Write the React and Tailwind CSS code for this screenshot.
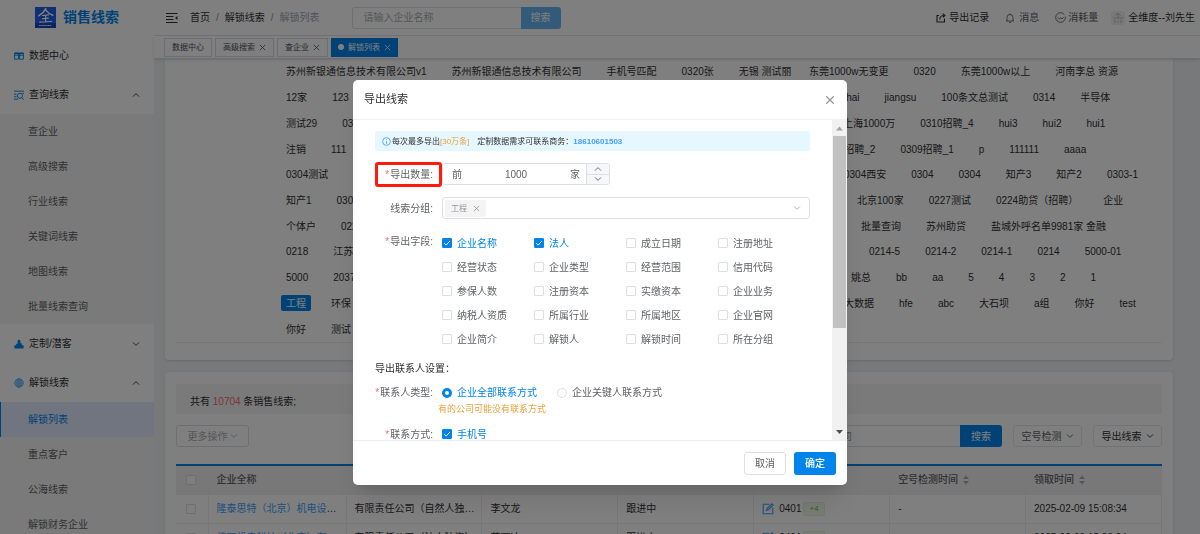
import React from "react";

const EXPORT_FIELDS = [
  "企业名称", "法人", "成立日期", "注册地址",
  "经营状态", "企业类型", "经营范围", "信用代码",
  "参保人数", "注册资本", "实缴资本", "企业业务",
  "纳税人资质", "所属行业", "所属地区", "企业官网",
  "企业简介", "解锁人", "解锁时间", "所在分组",
];

// `lead` is the width taken by the first tags of a row, before `rest` starts
const TAG_ROWS = [
  {
    lead: 523,
    first: ["苏州新银通信息技术有限公司v1", "苏州新银通信息技术有限公司", "手机号匹配", "0320张", "无锡 测试丽"],
    rest: ["东莞1000w无变更", "0320", "东莞1000w以上", "河南李总 资源"],
  },
  { lead: 533, first: ["12家", "123"], rest: ["shanghai", "jiangsu", "100条文总测试", "0314", "半导体"] },
  { lead: 557, first: ["测试29", "0311"], rest: ["上海1000万", "0310招聘_4", "hui3", "hui2", "hui1"] },
  { lead: 536, first: ["注销", "111"], rest: ["0309招聘_2", "0309招聘_1", "p", "111111", "aaaa"] },
  { lead: 558, first: ["0304测试"], rest: ["0304西安", "0304", "0304", "知产3", "知产2", "0303-1"] },
  { lead: 571, first: ["知产1", "0303"], rest: ["北京100家", "0227测试", "0224助贷（招聘）", "企业"] },
  { lead: 575, first: ["个体户", "0224"], rest: ["批量查询", "苏州助贷", "盐城外呼名单9981家 金融"] },
  { lead: 583, first: ["0218", "江苏"], rest: ["0214-5", "0214-2", "0214-1", "0214", "5000-01"] },
  { lead: 565, first: ["5000", "2037"], rest: ["姚总", "bb", "aa", "5", "4", "3", "2", "1"] },
  { lead: 558, first: ["工程", "环保"], rest: ["大数据", "hfe", "abc", "大石坝", "a组", "你好", "test"] },
  { lead: 558, first: ["你好", "测试"], rest: [] },
];

const TABLE_ROWS = [
  { name: "隆泰思特（北京）机电设备有限公司", type: "有限责任公司（自然人独资）", person: "李文龙" },
  { name: "佳丽机电科技（北京）有限公司", type: "有限责任公司（法人独资）", person: "蒋丽冰" },
];

const Chevron = ({ up, className = "" }) => (
  <svg viewBox="0 0 8 8" className={`h-2 w-2 ${className}`} fill="none" stroke="currentColor" strokeWidth="0.9">
    <path d={up ? "M1 5.6 4 2.6l3 3" : "M1 2.4l3 3 3-3"} />
  </svg>
);

const Close = ({ className = "" }) => (
  <svg viewBox="0 0 8 8" className={className} fill="none" stroke="currentColor" strokeWidth="0.9">
    <path d="M1 1l6 6M7 1L1 7" />
  </svg>
);

const Logo = () => (
  <svg viewBox="0 0 21 21" className="h-[21px] w-[21px]">
    <rect width="21" height="21" fill="#2361e6" />
    <rect y="16" width="21" height="5" fill="#1a49c4" />
    <g fill="none" stroke="#fff" strokeLinecap="round">
      <path strokeWidth="1.5" d="M10.8 1.6C9.3 4.6 7 7 3.6 8.8M10.4 2.6c2 2.6 4 4.4 7.4 5.6" />
      <path strokeWidth="1.2" d="M7.5 8.5l6-.6M7.7 11.6l5.6-.5M10.6 8.4v6.4M4.8 15.2l11.8-.7" />
      <path strokeWidth="0.9" strokeDasharray="0.8 1.3" d="M4.5 18.5h12" />
    </g>
  </svg>
);

const icons = {
  book: (
    <g fill="none" stroke="#0084ea" strokeWidth="0.9">
      <path d="M.6 2h3.8v6.2H.6zM5.6 2h3.8v6.2H5.6zM.6 4.2h8.8" />
      <path d="M.6 2.4h8.8" strokeWidth="1.4" />
    </g>
  ),
  query: (
    <g fill="none" stroke="#0084ea" strokeWidth="0.9">
      <path d="M0 1.2h10M0 4.2h2.6M0 6.8h2.6M0 9.2h4M8 8l1.8 1.6M8.4 3.4H10" />
      <circle cx="6" cy="5.8" r="2.5" />
    </g>
  ),
  custom: (
    <g fill="#0084ea">
      <path d="M5 .4l1.4 1.4v2.4h1.4v2h1.8v3.2H.4V6.200h1.800V4.800h1.400v-3z" />
    </g>
  ),
  globe: (
    <g fill="none" stroke="#409eff" strokeWidth="0.8">
      <circle cx="5" cy="5" r="4.3" />
      <ellipse cx="5" cy="5" rx="2" ry="4.3" />
      <path d="M.7 5h8.6M5 .7v8.6M1.4 2.9h7.2M1.4 7.1h7.2" />
    </g>
  ),
};

const MenuItem = ({ icon, label, arrow }) => (
  <button type="button" className="flex h-[39px] w-full items-center px-[14px] text-[#303133]">
    <svg viewBox="0 0 10 10" className="mr-[5px] h-[10px] w-[10px]">{icons[icon]}</svg>
    <span className="flex-1 text-left">{label}</span>
    {arrow ? <Chevron up={arrow === "up"} /> : null}
  </button>
);

const SubMenu = ({ items, active }) => (
  <ul className="bg-[#f5f5f5]">
    {items.map((item) => (
      <li key={item}>
        <a
          href="#"
          className={
            item === active
              ? "flex h-[35px] items-center border-l border-[#0084ea] bg-[#e0eaff] pl-[27px] text-[#0084ea]"
              : "flex h-[35px] items-center pl-7 text-[#606266]"
          }
        >
          {item}
        </a>
      </li>
    ))}
  </ul>
);

const Sidebar = () => (
  <aside className="w-[154px] shrink-0 bg-white">
    <div className="flex h-[35px] items-center gap-[7px] pl-[35px]">
      <Logo />
      <span className="text-[14px] font-bold text-[#0084ea]">销售线索</span>
    </div>
    <nav className="pt-px">
      <MenuItem icon="book" label="数据中心" />
      <MenuItem icon="query" label="查询线索" arrow="up" />
      <SubMenu items={["查企业", "高级搜索", "行业线索", "关键词线索", "地图线索", "批量线索查询"]} />
      <MenuItem icon="custom" label="定制/潜客" arrow="down" />
      <MenuItem icon="globe" label="解锁线索" arrow="up" />
      <SubMenu items={["解锁列表", "重点客户", "公海线索", "解锁财务企业"]} active="解锁列表" />
    </nav>
  </aside>
);

const Header = () => (
  <header className="flex h-9 items-center border-b border-[#e4e7ed] bg-white pr-[5px] pl-3 text-[#303133]">
    <svg viewBox="0 0 12 12" className="h-3 w-3" fill="none" stroke="currentColor" strokeWidth="1.1">
      <path d="M0 1.5h11.5M0 4.500h7.500M0 7.500h7.500M0 10.500h11.500" />
      <path d="M11.500 4v4L9 6z" fill="currentColor" stroke="none" />
    </svg>
    <nav className="ml-3 flex gap-[6px]">
      <a href="#">首页</a>
      <span className="text-[#909399]">/</span>
      <a href="#">解锁线索</a>
      <span className="text-[#909399]">/</span>
      <span className="text-[#a0a8b4]">解锁列表</span>
    </nav>
    <form className="ml-8 flex h-[22px]">
      <input
        type="text"
        aria-label="企业名称"
        placeholder="请输入企业名称"
        className="w-[169px] rounded-l-[3px] border border-r-0 border-[#dcdfe6] px-[11px] placeholder:text-[#a8abb2]"
      />
      <button type="button" className="w-10 rounded-r-[3px] bg-[#66b5f2] text-white">搜索</button>
    </form>
    <div className="ml-auto flex items-center">
      <a href="#" className="flex items-center gap-[3px]">
        <svg viewBox="0 0 10 10" className="h-[10px] w-[10px]" fill="none" stroke="currentColor" strokeWidth="1.1">
          <path d="M3 2.500H1v6.500h7.500V5.500M3.800 6.500c0-2.500 1.500-4 4.200-4M6.800.6 9 2.500 6.800 4.400" />
        </svg>
        导出记录
      </a>
      <a href="#" className="ml-4 flex items-center gap-1 text-[#606266]">
        <svg viewBox="0 0 10 10" className="h-[10px] w-[10px]" fill="none" stroke="currentColor" strokeWidth="0.9">
          <path d="M1 8h8M2 8V4.500a3 3 0 0 1 6 0V8M4 9.400h2M5 .4v1" />
        </svg>
        消息
      </a>
      <a href="#" className="ml-4 flex items-center gap-[2px] text-[#606266]">
        <svg viewBox="0 0 10 10" className="h-[11px] w-[11px]" fill="none" stroke="currentColor" strokeWidth="0.8">
          <circle cx="5" cy="5" r="4.4" strokeDasharray="24 2" />
          <path d="M2.400 4.800 4 6.400l1.300-1.200L6.300 6.400 7.800 4.800" />
        </svg>
        消耗量
      </a>
      <a href="#" className="ml-[13px] flex items-center gap-[3px]">
        <svg viewBox="0 0 14 14" className="h-[14px] w-[14px]">
          <rect width="14" height="14" rx="3" fill="#f0f0f0" />
          <path d="M7 2v5M4.500 4.500 7 2l2.500 2.500M2 7h10M4 9v3M7 10v2M10 9v3" fill="none" stroke="#bdbdbd" strokeWidth="1" />
        </svg>
        全维度--刘先生
      </a>
    </div>
  </header>
);

const pageTabs = [
  { label: "数据中心" },
  { label: "高级搜索", closable: true },
  { label: "查企业", closable: true },
  { label: "解锁列表", closable: true, active: true },
];

const PageTabs = () => (
  <div className="relative z-10 flex h-[23px] items-center gap-[3px] border-b border-[#d8dce5] bg-white pl-[10px] text-[8px] shadow-sm">
    {pageTabs.map((tab) => (
      <button
        key={tab.label}
        type="button"
        className={
          tab.active
            ? "flex h-[19px] items-center gap-1 border border-[#0084ea] bg-[#0084ea] px-[6px] text-white"
            : "flex h-[19px] items-center gap-1 border border-[#d8dce5] px-[7px] text-[#495060]"
        }
      >
        {tab.active ? <span className="h-[6px] w-[6px] rounded-full bg-white" /> : null}
        {tab.label}
        {tab.closable ? <Close className="h-[7px] w-[7px]" /> : null}
      </button>
    ))}
  </div>
);

const Tag = ({ label, active }) => (
  <button
    type="button"
    className={
      active
        ? "h-4 rounded-[2px] bg-[#0084ea] px-[5px] whitespace-nowrap text-white"
        : "h-4 px-[5px] whitespace-nowrap text-[#303133]"
    }
  >
    {label}
  </button>
);

const GroupCard = () => (
  <section className="rounded-b bg-white px-[11px] pb-[17px] shadow">
    <div className="grid h-[284px] border-b border-[#ebeef5] pl-[105px]">
      {TAG_ROWS.map((row, i) => (
        <div key={i} className="flex items-center">
          <div className="flex shrink-0 gap-[15px]" style={{ width: row.lead }}>
            {row.first.map((label) => (
              <Tag key={label} label={label} active={label === "工程"} />
            ))}
          </div>
          <div className="flex gap-[15px]">
            {row.rest.map((label, j) => (
              <Tag key={j} label={label} />
            ))}
          </div>
        </div>
      ))}
    </div>
  </section>
);

const SortIcon = () => (
  <svg viewBox="0 0 6 10" className="h-[10px] w-[6px]" fill="#a8abb2">
    <path d="M0 4l3-3.400L6 4zM0 6l3 3.400L6 6z" />
  </svg>
);

const cell = "truncate border-r border-b border-[#ebeef5] pr-[6px] pl-2";

const ListCard = () => (
  <section className="rounded bg-white px-[11px] pt-3 shadow">
    <p className="flex h-[30px] items-center bg-[#f5f5f5] px-[14px] pt-1 text-[#303133]">
      共有&nbsp;<span className="text-[#f56c6c]">10704</span>&nbsp;条销售线索;
    </p>
    <div className="mt-[11px] flex h-[22px] items-stretch">
      <button type="button" className="flex w-[73px] items-center justify-center gap-[2px] rounded-[3px] border border-[#dcdfe6] text-[#a8abb2]">
        更多操作
        <Chevron />
      </button>
      <input
        type="text"
        aria-label="搜索公司"
        placeholder="请输入公司"
        className="ml-auto w-[171px] rounded-l-[3px] border border-r-0 border-[#dcdfe6] px-3 placeholder:text-[#909399]"
      />
      <button type="button" className="w-[42px] rounded-r-[3px] bg-[#0084ea] text-white">搜索</button>
      <button type="button" className="ml-[11px] flex w-[69px] items-center justify-center gap-1 rounded-[3px] border border-[#e4e7ed] text-[#606266]">
        空号检测
        <Chevron />
      </button>
      <button type="button" className="ml-[11px] flex w-[69px] items-center justify-center gap-1 rounded-[3px] border border-[#e4e7ed] text-[#303133]">
        导出线索
        <Chevron />
      </button>
    </div>
    <table className="mt-[17px] w-full table-fixed border-t-2 border-[#0084ea] text-left">
      <thead>
        <tr className="h-[29px] bg-[#f0f0f0] text-[#606266]">
          <th className={`${cell} w-8`}>
            <input type="checkbox" aria-label="全选" className="ml-[2px] block h-[10px] w-[10px] appearance-none rounded-[1px] border border-[#dcdfe6] bg-white" />
          </th>
          <th className={`${cell} w-[138px] font-medium`}>企业全称</th>
          <th className={`${cell} font-medium`}>企业类型</th>
          <th className={`${cell} font-medium`}>法人</th>
          <th className={`${cell} font-medium`}>跟进状态</th>
          <th className={`${cell} font-medium`}>分组</th>
          <th className={`${cell} font-medium`}>
            <span className="flex items-center gap-[5px]">空号检测时间 <SortIcon /></span>
          </th>
          <th className={`${cell} font-medium`}>
            <span className="flex items-center gap-[5px]">领取时间 <SortIcon /></span>
          </th>
        </tr>
      </thead>
      <tbody className="text-[#303133]">
        {TABLE_ROWS.map((row) => (
          <tr key={row.name} className="h-[29px]">
            <td className={cell}>
              <input type="checkbox" aria-label={row.name} className="ml-[2px] block h-[10px] w-[10px] appearance-none rounded-[1px] border border-[#dcdfe6] bg-white" />
            </td>
            <td className={cell}><a href="#" className="text-[#409eff]">{row.name}</a></td>
            <td className={cell}>{row.type}</td>
            <td className={cell}>{row.person}</td>
            <td className={cell}>跟进中</td>
            <td className={cell}>
              <span className="flex items-center">
                <svg viewBox="0 0 12 12" className="mr-[5px] h-3 w-3" fill="none" stroke="#409eff" strokeWidth="1.1">
                  <path d="M7.500 1.200H1.200v9.600h9.600V4.800M4.500 7.500l.4-1.600L10 .8l1.200 1.200-5.100 5.100z" />
                </svg>
                0401
                <span className="ml-[2px] rounded-[2px] border border-[#e1f3d8] bg-[#f0f9eb] px-[5px] text-[8px] leading-3 text-[#67c23a]">+4</span>
              </span>
            </td>
            <td className={cell}>-</td>
            <td className={cell}>2025-02-09 15:08:34</td>
          </tr>
        ))}
      </tbody>
    </table>
  </section>
);

const Checkbox = ({ label, checked }) => (
  <label className="flex h-6 items-center gap-[5px] text-[#606266] has-checked:text-[#0084ea]">
    <span className="relative h-[10px] w-[10px]">
      <input
        type="checkbox"
        defaultChecked={checked}
        className="peer block h-[10px] w-[10px] appearance-none rounded-[1px] border border-[#dcdfe6] bg-white checked:border-[#0084ea] checked:bg-[#0084ea]"
      />
      <svg viewBox="0 0 10 10" className="pointer-events-none absolute inset-0 hidden peer-checked:block" fill="none" stroke="#fff" strokeWidth="1">
        <path d="M2.300 5.200l1.900 1.900 3.600-4" />
      </svg>
    </span>
    {label}
  </label>
);

const Radio = ({ label, checked }) => (
  <label className="flex items-center gap-[5px] text-[#606266] has-checked:text-[#0084ea]">
    <input
      type="radio"
      name="contactType"
      defaultChecked={checked}
      className="h-[10px] w-[10px] appearance-none rounded-full border border-[#dcdfe6] bg-white checked:border-[3px] checked:border-[#0084ea]"
    />
    {label}
  </label>
);

const Label = ({ htmlFor, required, children }) => (
  <label htmlFor={htmlFor} className="w-[58px] shrink-0 text-right whitespace-nowrap text-[#606266]">
    {required ? <span className="mr-px text-[#f56c6c]">*</span> : null}
    {children}:
  </label>
);

const ScrollBar = () => (
  <div className="flex w-[15px] shrink-0 flex-col bg-[#f1f1f1]">
    <svg viewBox="0 0 15 16" className="h-4" fill="#a3a3a3"><path d="M4 10.500l3.500-4 3.500 4z" /></svg>
    <div className="mx-px h-48 bg-[#c1c1c1]" />
    <svg viewBox="0 0 15 16" className="mt-auto h-4" fill="#505050"><path d="M4 6l3.500 4L11 6z" /></svg>
  </div>
);

const ExportDialog = () => (
  <div className="fixed inset-0 z-20 bg-black/50 pt-20">
    <div role="dialog" aria-label="导出线索" className="mx-auto w-[494px] rounded-[5px] bg-white shadow-xl">
      <div className="flex h-10 items-center justify-between border-b border-[#f0f0f0] px-[11px] text-[#303133]">
        <h2 className="text-[11px]">导出线索</h2>
        <button type="button" aria-label="关闭" className="p-px text-[#909399]">
          <Close className="h-[10px] w-[10px]" />
        </button>
      </div>

      <div className="flex h-80 overflow-hidden">
        <div className="flex-1 px-[22px] pt-[11px]">
          <div className="flex h-5 items-center rounded-[2px] bg-[#e6f7ff] pl-[7px] text-[8px] text-[#303133]">
            <svg viewBox="0 0 10 10" className="mr-px h-[9px] w-[9px]" fill="none" stroke="#409eff" strokeWidth="0.9">
              <circle cx="5" cy="5" r="4.3" />
              <path d="M5 4.400v3.200M5 2.300v1" />
            </svg>
            每次最多导出
            <span className="text-[#e6a23c]">[30万条]</span>
            <span className="ml-2">定制数据需求可联系商务：</span>
            <b className="text-[#409eff]">18610601503</b>
          </div>

          <div className="mt-3 flex items-center gap-[9px]">
            <div className="relative flex">
              <Label htmlFor="exportCount" required>导出数量</Label>
              <span className="pointer-events-none absolute -inset-y-[5px] -right-[9px] left-0 rounded-[3px] border-[3px] border-[#ff1a0e]" />
            </div>
            <div className="flex h-[22px] w-[168px] items-center overflow-hidden rounded-[3px] border border-[#dcdfe6] text-[#606266]">
              <span className="pl-[9px]">前</span>
              <input id="exportCount" type="text" defaultValue="1000" className="min-w-0 flex-1 text-center" />
              <span className="pr-[6px]">家</span>
              <div className="flex h-full w-[23px] flex-col divide-y divide-[#dcdfe6] border-l border-[#dcdfe6] bg-[#f5f7fa]">
                <button type="button" aria-label="增加" className="flex flex-1 items-center justify-center"><Chevron up /></button>
                <button type="button" aria-label="减少" className="flex flex-1 items-center justify-center"><Chevron /></button>
              </div>
            </div>
          </div>

          <div className="mt-3 flex items-center gap-[9px]">
            <Label htmlFor="exportGroup">线索分组</Label>
            <button id="exportGroup" type="button" className="flex h-[22px] flex-1 items-center justify-between rounded-[3px] border border-[#dcdfe6] pr-2 pl-[2px]">
              <span className="flex h-[17px] items-center gap-[6px] rounded-[2px] bg-[#f4f4f5] px-[6px] text-[8px] text-[#909399]">
                工程
                <Close className="h-[7px] w-[7px]" />
              </span>
              <Chevron className="text-[#a8abb2]" />
            </button>
          </div>

          <div className="mt-3 flex gap-[9px]">
            <div className="flex pt-[3px]"><Label required>导出字段</Label></div>
            <div className="grid flex-1 grid-cols-4">
              {EXPORT_FIELDS.map((field, i) => (
                <Checkbox key={field} label={field} checked={i < 2} />
              ))}
            </div>
          </div>

          <h3 className="mt-[10px] text-[#303133]">导出联系人设置：</h3>

          <div className="mt-[9px] flex items-center gap-[9px]">
            <Label required>联系人类型</Label>
            <div className="flex gap-5">
              <Radio label="企业全部联系方式" checked />
              <Radio label="企业关键人联系方式" />
            </div>
          </div>
          <p className="mt-[2px] ml-[63px] text-[9px] text-[#e6a23c]">有的公司可能没有联系方式</p>

          <div className="mt-[5px] flex items-center gap-[9px]">
            <Label required>联系方式</Label>
            <Checkbox label="手机号" checked />
          </div>
        </div>
        <ScrollBar />
      </div>

      <div className="flex h-[45px] items-center justify-end gap-2 border-t border-[#ebeef5] px-[11px]">
        <button type="button" className="h-[23px] w-[42px] rounded-[3px] border border-[#dcdfe6] text-[#606266]">取消</button>
        <button type="button" className="h-[23px] w-[42px] rounded-[3px] bg-[#0084ea] font-medium text-white">确定</button>
      </div>
    </div>
  </div>
);

const App = () => {
  return (
    <div className="flex h-screen overflow-hidden bg-[#f0f2f5] font-['Liberation_Sans','Noto_Sans_CJK_SC',sans-serif] text-[10px] leading-[15px]">
      <Sidebar />
      <div className="min-w-0 flex-1">
        <Header />
        <PageTabs />
        <main className="space-y-3 pr-[27px] pl-[11px]">
          <GroupCard />
          <ListCard />
        </main>
      </div>
      <ExportDialog />
    </div>
  );
};

export default App;
